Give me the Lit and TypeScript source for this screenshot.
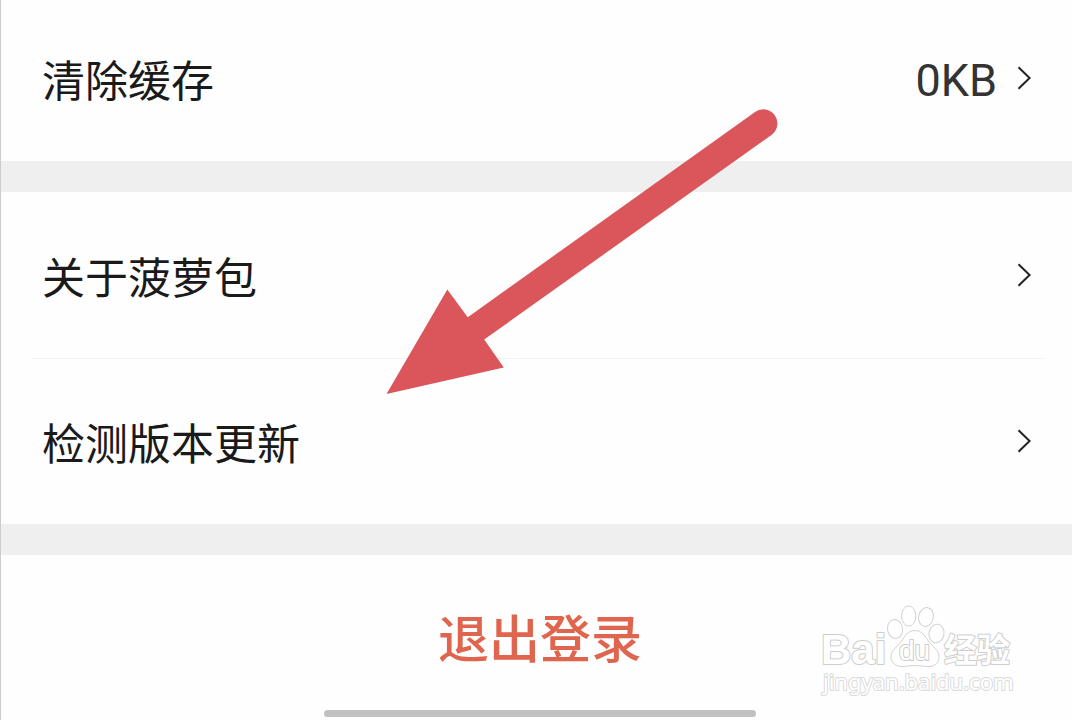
import { LitElement, html, css, nothing } from "lit";
import { customElement, property } from "lit/decorators.js";

@customElement("settings-row")
class SettingsRow extends LitElement {
  @property() label = "";
  @property() value = "";

  static styles = css`
    :host {
      display: block;
    }
    .row {
      box-sizing: border-box;
      width: 100%;
      display: flex;
      align-items: center;
      gap: 20px;
      margin: 0;
      border: 0;
      padding: 50px 40px 51px 42px;
      background: none;
      color: #1a1a1a;
      font-family: Roboto, "Noto Sans CJK SC", sans-serif;
      font-size: 43px;
      line-height: 64px;
      text-align: left;
      cursor: pointer;
    }
    .label {
      flex: 1;
      font-family: "Noto Sans CJK SC", sans-serif;
    }
    .value {
      padding-top: 6px;
      font-size: 45px;
      line-height: 58px;
      color: #333;
    }
    .chevron {
      width: 15px;
      height: 24px;
      fill: none;
      stroke: #222;
      stroke-width: 2;
    }
  `;

  render() {
    return html`
      <button class="row" type="button">
        <span class="label">${this.label}</span>
        ${this.value ? html`<span class="value">${this.value}</span>` : nothing}
        <svg class="chevron" viewBox="0 0 15 24" aria-hidden="true">
          <path d="M1.5 1.2 12.6 12 1.5 22.8" />
        </svg>
      </button>
    `;
  }
}

@customElement("baidu-mark")
class BaiduMark extends LitElement {
  static styles = css`
    :host {
      display: block;
    }
    svg {
      display: block;
      width: 200px;
      height: 96px;
    }
    .ink {
      fill: #fff;
      stroke: #d2d2d2;
      stroke-width: 1;
    }
    text {
      fill: #fff;
      stroke: #cdcdcd;
      stroke-width: 2;
      stroke-linejoin: round;
      paint-order: stroke;
    }
    .bai {
      font: bold 42px "Liberation Sans", sans-serif;
    }
    .du {
      font: 28px "Liberation Sans", sans-serif;
    }
    .cn {
      font: bold 33px "Noto Sans CJK SC", sans-serif;
    }
    .url {
      font: 22px "Noto Sans", sans-serif;
      stroke: #dadada;
    }
  `;

  render() {
    return html`
      <svg viewBox="0 0 200 96" role="img" aria-label="Baidu 经验">
        <text class="bai" x="1" y="60">Bai</text>
        <ellipse class="ink" cx="75" cy="25" rx="7.500" ry="9.500" transform="rotate(-8 75 25)" />
        <ellipse class="ink" cx="88.700" cy="12" rx="7.200" ry="10" />
        <ellipse class="ink" cx="106" cy="13" rx="7.300" ry="9.500" transform="rotate(12 106 13)" />
        <ellipse class="ink" cx="116.500" cy="29.500" rx="7.500" ry="9.300" transform="rotate(10 116.5 29.5)" />
        <path
          class="ink"
          d="M95 26.500C102 26.500 105 32 109 38C113 43 119 46 119 52.500C119 59 115 62.500 109 62.500C104 62.500 100 61.500 95 61.500C90 61.500 87 62.500 82 62.500C76 62.500 71 59 71 52.500C71 46 77 43 81 38C85 32 88 26.500 95 26.500Z"
        />
        <text class="du" x="79" y="56">du</text>
        <text class="cn" x="124" y="58">经验</text>
        <text class="url" x="3" y="86">jingyan.baidu.com</text>
      </svg>
    `;
  }
}

@customElement("app-root")
class AppRoot extends LitElement {
  static styles = css`
    :host {
      display: block;
      font-family: "Noto Sans CJK SC", sans-serif;
    }
    .screen {
      box-sizing: border-box;
      position: relative;
      min-height: 100vh;
      display: flex;
      flex-direction: column;
      overflow: hidden;
      background: #fefefe;
      box-shadow: inset 1px 0 #ccc;
    }
    .group {
      padding-top: 1px;
    }
    .first {
      margin-top: -4px;
    }
    .band {
      height: 31px;
      margin-left: 1px;
      background: #efefef;
    }
    .divider {
      height: 1px;
      margin: 0 28px 0 32px;
      border: 0;
      background: #f3f3f3;
    }
    .footer {
      flex: 1;
      display: flex;
      align-items: center;
      justify-content: center;
      padding: 0 0 4px 8px;
    }
    .logout {
      margin: 0;
      border: 0;
      padding: 0;
      background: none;
      color: #e0654f;
      font-family: "Noto Sans CJK SC", sans-serif;
      font-size: 51px;
      font-weight: 500;
      line-height: 76px;
      cursor: pointer;
    }
    .arrow {
      position: absolute;
      left: 386px;
      top: 108px;
      width: 392px;
      height: 288px;
      fill: #db565b;
      pointer-events: none;
    }
    .mark {
      position: absolute;
      right: 52px;
      bottom: 20px;
      pointer-events: none;
    }
    .home {
      position: absolute;
      left: 324px;
      right: 316px;
      bottom: 3px;
      height: 7px;
      border-radius: 4px;
      background: #c1c1c1;
    }
  `;

  render() {
    return html`
      <main class="screen">
        <section class="first">
          <settings-row label="清除缓存" value="0KB"></settings-row>
        </section>
        <div class="band"></div>
        <section class="group">
          <settings-row label="关于菠萝包"></settings-row>
          <hr class="divider" />
          <settings-row label="检测版本更新"></settings-row>
        </section>
        <div class="band"></div>
        <footer class="footer">
          <button class="logout" type="button">退出登录</button>
        </footer>
        <svg class="arrow" viewBox="0 0 392 288" aria-hidden="true">
          <path d="M0.500 286 61.300 181.500 81.800 209.200 369 4A14 14 0 0 1 385.500 27L98.200 231.500 117.800 259.500Z" />
        </svg>
        <baidu-mark class="mark"></baidu-mark>
        <div class="home"></div>
      </main>
    `;
  }
}
